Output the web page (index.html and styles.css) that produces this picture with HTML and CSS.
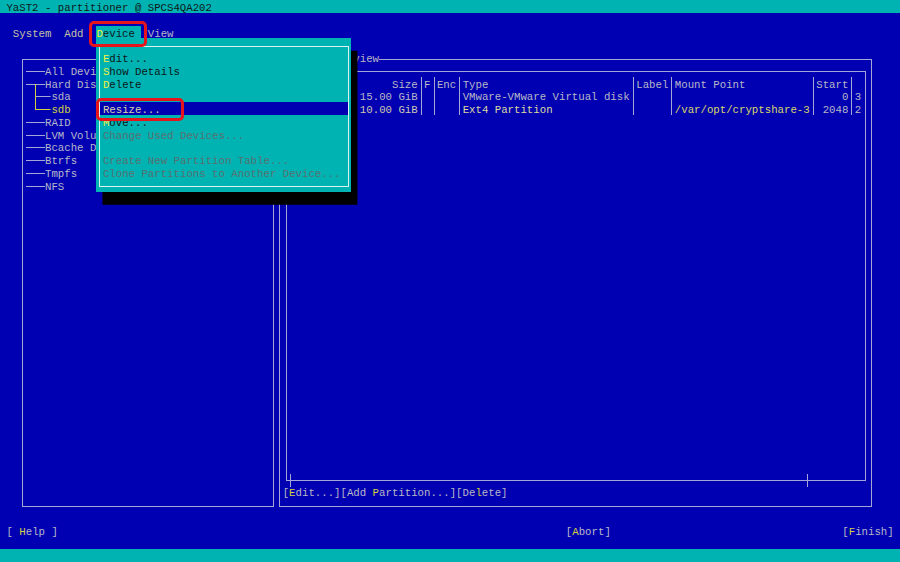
FILE: index.html
```html
<!DOCTYPE html>
<html lang="en">
<head>
<meta charset="utf-8">
<title>YaST2 - partitioner</title>
<link rel="stylesheet" href="styles.css">
</head>
<body>
<div class="screen">
  <header class="titlebar">YaST2 - partitioner @ SPCS4QA202</header>

  <nav class="menubar">
    <span class="mi mi-system">System</span>
    <span class="mi mi-add">Add</span>
    <span class="mi mi-device active"><b class="hk">D</b>evice</span>
    <span class="mi mi-view">View</span>
  </nav>

  <main class="workspace">
    <section class="pane tree-pane">
      <ul class="tree">
        <li class="node"><span class="conn c-h"></span><span class="lbl">All Devices</span></li>
        <li class="node"><span class="conn c-tee"></span><span class="lbl">Hard Disks</span></li>
        <li class="node"><span class="conn c-mid"></span><span class="lbl">sda</span></li>
        <li class="node sel"><span class="conn c-end"></span><span class="lbl">sdb</span></li>
        <li class="node"><span class="conn c-h"></span><span class="lbl">RAID</span></li>
        <li class="node"><span class="conn c-h"></span><span class="lbl">LVM Volume Groups</span></li>
        <li class="node"><span class="conn c-h"></span><span class="lbl">Bcache Devices</span></li>
        <li class="node"><span class="conn c-h"></span><span class="lbl">Btrfs</span></li>
        <li class="node"><span class="conn c-h"></span><span class="lbl">Tmpfs</span></li>
        <li class="node"><span class="conn c-h"></span><span class="lbl">NFS</span></li>
      </ul>
    </section>

    <section class="pane overview-pane">
      <h2 class="pane-title">Device Overview</h2>
      <div class="table-box">
        <div class="tbl">
          <div class="tr th">
            <span class="td w-dev">Device</span><span class="sep"></span>
            <span class="td w-size r">Size</span><span class="sep"></span>
            <span class="td w-f">F</span><span class="sep"></span>
            <span class="td w-enc">Enc</span><span class="sep"></span>
            <span class="td w-type">Type</span><span class="sep"></span>
            <span class="td w-label">Label</span><span class="sep"></span>
            <span class="td w-mount">Mount Point</span><span class="sep"></span>
            <span class="td w-start r">Start</span><span class="sep"></span>
            <span class="td w-end"></span>
          </div>
          <div class="tr">
            <span class="td w-dev">/dev/sda</span><span class="sep"></span>
            <span class="td w-size r">15.00 GiB</span><span class="sep"></span>
            <span class="td w-f"></span><span class="sep"></span>
            <span class="td w-enc"></span><span class="sep"></span>
            <span class="td w-type">VMware-VMware Virtual disk</span><span class="sep"></span>
            <span class="td w-label"></span><span class="sep"></span>
            <span class="td w-mount"></span><span class="sep"></span>
            <span class="td w-start r">0</span><span class="sep"></span>
            <span class="td w-end">3</span>
          </div>
          <div class="tr cur">
            <span class="td w-dev">/dev/sdb1</span><span class="sep"></span>
            <span class="td w-size r">10.00 GiB</span><span class="sep"></span>
            <span class="td w-f"></span><span class="sep"></span>
            <span class="td w-enc"></span><span class="sep"></span>
            <span class="td w-type hi">Ext4 Partition</span><span class="sep"></span>
            <span class="td w-label"></span><span class="sep"></span>
            <span class="td w-mount mnt">/var/opt/cryptshare-3</span><span class="sep"></span>
            <span class="td w-start r plain">2048</span><span class="sep"></span>
            <span class="td w-end plain">2</span>
          </div>
        </div>
        <span class="tick tick-a"></span>
        <span class="tick tick-b"></span>
      </div>
      <div class="actions">[<b class="hk">E</b>dit...][Add <b class="hk">P</b>artition...][De<b class="hk">l</b>ete]</div>
    </section>
  </main>

  <footer class="buttons">
    <span class="btn btn-help">[ <b class="hk">H</b>elp ]</span>
    <span class="btn btn-abort">[<b class="hk">A</b>bort]</span>
    <span class="btn btn-finish">[<b class="hk">F</b>inish]</span>
  </footer>

  <div class="statusbar"></div>

  <div class="dropdown">
    <ul class="menu-frame">
      <li class="item"><b class="hk">E</b>dit...</li>
      <li class="item"><b class="hk">S</b>how Details</li>
      <li class="item"><b class="hk">D</b>elete</li>
      <li class="item blank"></li>
      <li class="item current">Resize...</li>
      <li class="item"><b class="hk">M</b>ove...</li>
      <li class="item disabled">Change Used Devices...</li>
      <li class="item blank"></li>
      <li class="item disabled">Create New Partition Table...</li>
      <li class="item disabled">Clone Partitions to Another Device...</li>
    </ul>
  </div>

  <div class="annot annot-device"></div>
  <div class="annot annot-resize"></div>
</div>
</body>
</html>
```

FILE: styles.css
```css
:root {
  --cw: 6.43px;
  --rh: 12.77px;
  --lh: calc(var(--rh) + 3.5px);
  --blue: #0000b2;
  --cyan: #00b3b3;
  --fg: #b8b8c6;
  --line: #a6a6d6;
  --yel: #d2d23c;
  --hk-cyan: #f0f040;
  --red: #e8141c;
}

* {
  box-sizing: border-box;
  margin: 0;
  padding: 0;
}

html,
body {
  width: 900px;
  height: 562px;
  overflow: hidden;
  background: var(--blue);
}

body {
  font-family: "Liberation Mono", "DejaVu Sans Mono", monospace;
  font-size: 10.715px;
  line-height: var(--lh);
  color: var(--fg);
  white-space: nowrap;
}

b {
  font-weight: normal;
}

ul {
  list-style: none;
}

.screen {
  position: relative;
  width: 900px;
  height: 562px;
  display: flex;
  flex-direction: column;
}

/* ---- title bar ---- */
.titlebar {
  height: var(--rh);
  flex: none;
  background: var(--cyan);
  color: #101818;
  padding-left: var(--cw);
  font-size: inherit;
  font-weight: normal;
}

/* ---- menu bar ---- */
.menubar {
  height: var(--rh);
  flex: none;
  margin-top: var(--rh);
  display: flex;
  padding-left: calc(var(--cw) * 2);
  color: #c6c2a2;
}

.mi {
  height: var(--rh);
}

.mi-add {
  margin-left: calc(var(--cw) * 2);
}

.mi-device {
  margin-left: calc(var(--cw) * 2);
  width: calc(var(--cw) * 7);
}

.mi-view {
  margin-left: var(--cw);
  color: var(--fg);
}

.mi.active {
  background: var(--cyan);
  color: #0c1818;
}

.hk {
  color: var(--yel);
}

.mi.active .hk,
.item .hk {
  color: var(--hk-cyan);
}

/* ---- workspace ---- */
.workspace {
  height: calc(var(--rh) * 37);
  flex: none;
  margin-top: var(--rh);
  display: flex;
  align-items: flex-start;
  gap: calc(var(--cw) - 1px);
  padding: 7.5px 0 0 calc(var(--cw) * 3 + 3px);
}

.pane {
  border: 1px solid var(--line);
  height: calc(var(--rh) * 35 + 1px);
  flex: none;
}

.tree-pane {
  width: calc(var(--cw) * 39 + 1px);
  padding: 4.27px 0 0 2.45px;
  overflow: hidden;
}

.node {
  display: flex;
  height: var(--rh);
}

.conn {
  flex: none;
  height: var(--rh);
  width: calc(var(--cw) * 3);
}

.c-h {
  background: linear-gradient(var(--line), var(--line)) 0 7px / 100% 1px no-repeat;
}

.c-tee {
  background:
    linear-gradient(var(--yel), var(--yel)) calc(var(--cw) + 3px) 7px / 1px calc(100% - 7px) no-repeat,
    linear-gradient(var(--line), var(--line)) 0 7px / 100% 1px no-repeat;
}

.c-mid {
  width: calc(var(--cw) * 4);
  background:
    linear-gradient(var(--yel), var(--yel)) calc(var(--cw) + 3px) 0 / 1px 100% no-repeat,
    linear-gradient(var(--line), var(--line)) calc(var(--cw) + 3px) 7px / calc(100% - var(--cw) - 3px) 1px no-repeat;
}

.c-end {
  width: calc(var(--cw) * 4);
  background:
    linear-gradient(var(--yel), var(--yel)) calc(var(--cw) + 3px) 0 / 1px 8px no-repeat,
    linear-gradient(var(--yel), var(--yel)) calc(var(--cw) + 3px) 7px / calc(100% - var(--cw) - 3px) 1px no-repeat;
}

.node.sel .lbl {
  color: var(--yel);
}

/* ---- overview pane ---- */
.overview-pane {
  width: calc(var(--cw) * 92 + 1px);
  display: flex;
  flex-direction: column;
  padding-left: 2.2px;
}

.pane-title {
  align-self: flex-start;
  height: var(--rh);
  margin-top: -8.5px;
  background: var(--blue);
  font-size: inherit;
  line-height: var(--lh);
  font-weight: normal;
  color: var(--fg);
}

.table-box {
  position: relative;
  flex: none;
  height: calc(var(--rh) * 32 + 1px);
  margin: 7.5px 5.45px 0 3px;
  border: 1px solid var(--line);
  padding: 4.27px 0 0 2.45px;
}

.tbl {
  overflow: hidden;
}

.tr {
  display: flex;
  height: var(--rh);
}

.td {
  flex: none;
  height: var(--rh);
}

.td.r {
  text-align: right;
}

.sep {
  flex: none;
  width: var(--cw);
  height: var(--rh);
  background: linear-gradient(var(--line), var(--line)) 3px 0 / 1px 100% no-repeat;
}

.w-dev { width: calc(var(--cw) * 10); }
.w-size { width: calc(var(--cw) * 9); }
.w-f { width: var(--cw); }
.w-enc { width: calc(var(--cw) * 3); }
.w-type { width: calc(var(--cw) * 26); }
.w-label { width: calc(var(--cw) * 5); }
.w-mount { width: calc(var(--cw) * 21); }
.w-start { width: calc(var(--cw) * 5); }
.w-end { width: var(--cw); }

.tr.cur .td {
  color: #cccab0;
}

.tr.cur .td.hi {
  color: #dcdaa0;
}

.tr.cur .td.mnt {
  color: #d8d868;
}

.tr.cur .td.plain {
  color: var(--fg);
}

.tick {
  position: absolute;
  bottom: -7px;
  width: 1px;
  height: 13px;
  background: var(--line);
}

.tick-a {
  left: 3px;
}

.tick-b {
  left: 520px;
}

.actions {
  height: var(--rh);
  flex: none;
  margin-top: 4.27px;
}

/* ---- footer ---- */
.buttons {
  height: var(--rh);
  flex: none;
  display: flex;
  padding-left: var(--cw);
}

.btn {
  height: var(--rh);
}

.btn-abort {
  margin-left: calc(var(--cw) * 79);
}

.btn-finish {
  margin-left: calc(var(--cw) * 36);
}

.statusbar {
  flex: 1;
  margin-top: var(--rh);
  background: var(--cyan);
}

/* ---- dropdown menu (overlay) ---- */
.dropdown {
  position: absolute;
  left: 96.4px;
  top: calc(var(--rh) * 3);
  width: 255px;
  height: calc(var(--rh) * 12);
  background: var(--cyan);
  box-shadow: var(--cw) var(--rh) 0 #000;
  padding: 7.5px 2.4px 0 3px;
}

.menu-frame {
  height: calc(var(--rh) * 11 + 1px);
  border: 1px solid #dcf2f2;
  padding-top: 4.27px;
}

.item {
  height: var(--rh);
  padding-left: 2.5px;
  color: #0c1616;
}

.item.current {
  background: var(--blue);
  color: #d8d4a6;
}

.item.disabled {
  color: #587070;
}

/* ---- red annotation marks (overlay) ---- */
.annot {
  position: absolute;
  border: 3px solid var(--red);
  border-radius: 5px;
}

.annot-device {
  left: 88.5px;
  top: 20.5px;
  width: 58.5px;
  height: 26px;
}

.annot-resize {
  left: 96px;
  top: 98px;
  width: 88px;
  height: 23px;
}
```
